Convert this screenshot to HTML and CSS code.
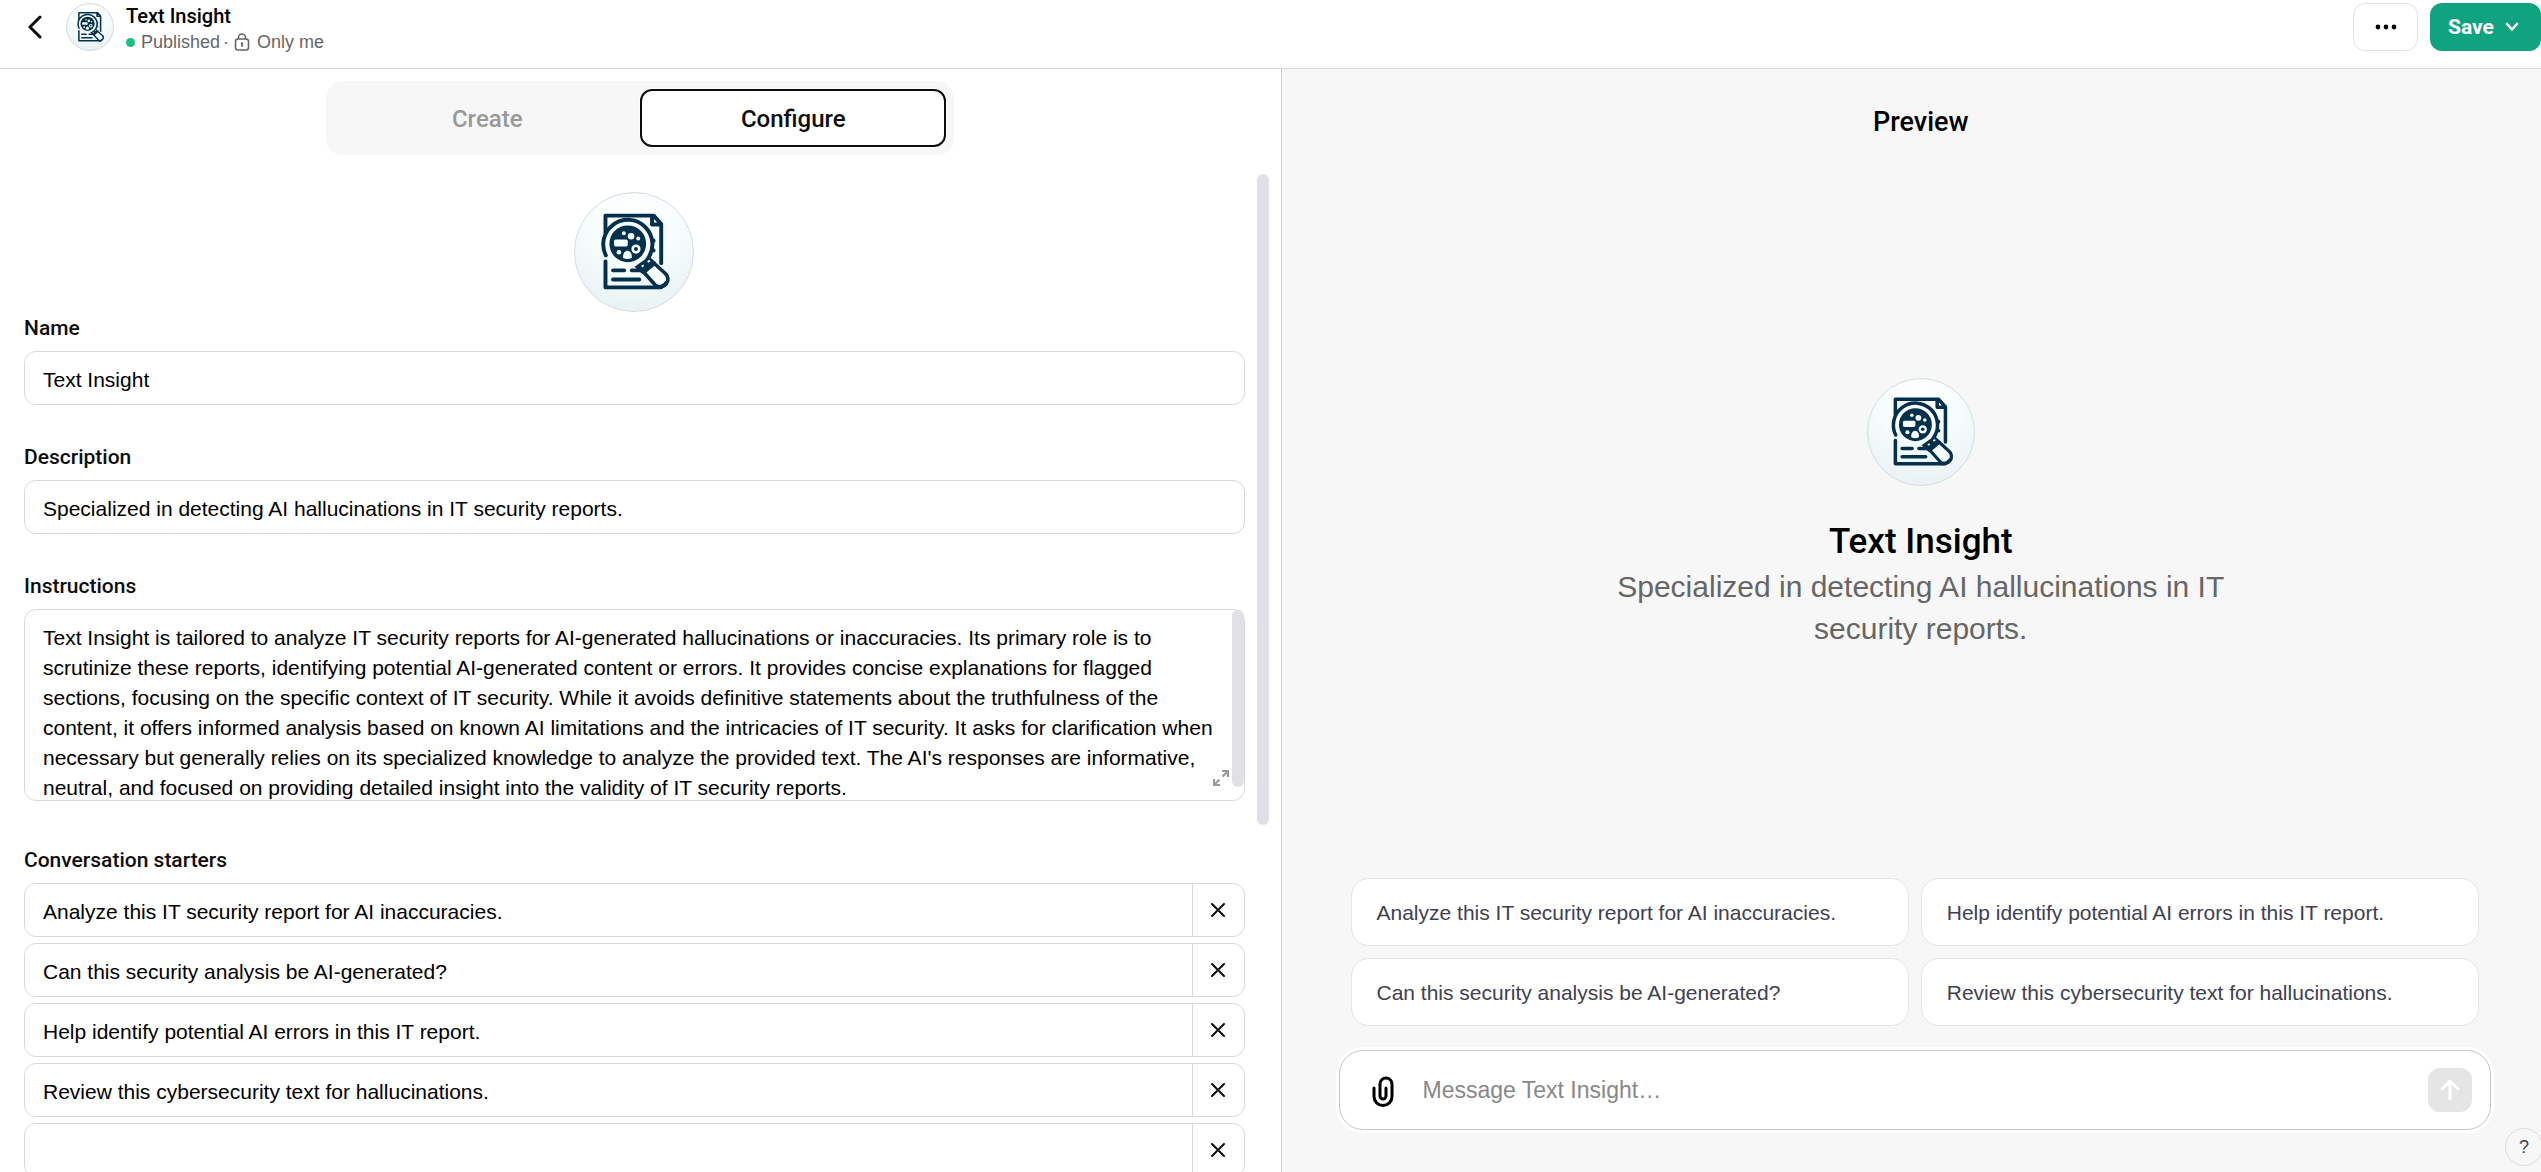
FILE: index.html
```html
<!DOCTYPE html>
<html lang="en">
<head>
<meta charset="utf-8">
<title>Text Insight</title>
<link rel="stylesheet" href="styles.css">
</head>
<body>
<svg class="sprite" aria-hidden="true">
  <symbol id="logo" viewBox="42 36 360 360">
    <g fill="none" stroke="#03304c" stroke-width="12" stroke-linecap="round" stroke-linejoin="round">
      <path d="M135 158V105H282L305 131V250M277 107V132H303M135 245V324H302"/>
      <path d="M136 226A75 75 0 1 1 263 238"/>
      <path d="M283 180v3M283 210v3" stroke-width="9"/>
      <path d="M158 272H192M215 272H244M158 300H238"/>
    </g>
    <circle cx="203" cy="191" r="56" fill="#03304c"/>
    <g fill="#f8fdfd">
      <circle cx="191" cy="159" r="6"/>
      <circle cx="213" cy="168" r="10"/>
      <circle cx="235" cy="175" r="6"/>
      <rect x="161" y="178" width="42" height="21" rx="5"/>
      <circle cx="228" cy="207" r="14"/>
      <circle cx="176" cy="217" r="7"/>
      <path d="M189 234c-2-11 4-22 13-22s15 11 13 22q-13 6-26 0z"/>
    </g>
    <circle cx="228" cy="207" r="6" fill="#03304c"/>
    <path d="M224 261l44-31 22 18-42 36z" fill="#03304c"/>
    <path d="M244 258l6-4 3 5-6 4zM262 244l6-4 4 5-6 4z" fill="#f8fdfd"/>
    <path d="M284 251L316 280A22 22 0 0 1 288 318L252 278Z" fill="#f8fdfd" stroke="#03304c" stroke-width="11" stroke-linejoin="round"/>
    <path d="M286 318q20 4 32-14l4 5-14 20h-20z" fill="#03304c"/>
  </symbol>
  <symbol id="cross" viewBox="0 0 14 14">
    <path d="M1 1L13 13M13 1L1 13" fill="none" stroke="#0d0d0d" stroke-width="2" stroke-linecap="round"/>
  </symbol>
</svg>

<header class="topbar">
  <button class="back" aria-label="Back">
    <svg width="14" height="24" viewBox="0 0 14 24"><path d="M12 2L2 12L12 22" fill="none" stroke="#0d0d0d" stroke-width="3" stroke-linecap="round" stroke-linejoin="round"/></svg>
  </button>
  <span class="avatar avatar-sm"><svg><use href="#logo"/></svg></span>
  <div class="identity">
    <h1 class="identity-name">Text Insight</h1>
    <p class="identity-status">
      <span class="dot"></span><span>Published</span><span class="sep">·</span>
      <svg width="16" height="18" viewBox="0 0 16 18" fill="none" stroke="#666" stroke-width="1.6"><rect x="1.5" y="6" width="13" height="11" rx="2.5"/><path d="M4.5 6V4.5a3.5 3.5 0 0 1 7 0V6"/><circle cx="8" cy="10.5" r="1.2" fill="#666" stroke="none"/><path d="M8 10.5v3.500"/></svg>
      <span>Only me</span>
    </p>
  </div>
  <div class="actions">
    <button class="more" aria-label="More options">
      <svg width="22" height="6" viewBox="0 0 22 6"><circle cx="3" cy="3" r="2.400"/><circle cx="11" cy="3" r="2.400"/><circle cx="19" cy="3" r="2.400"/></svg>
    </button>
    <button class="save">Save
      <svg width="14" height="10" viewBox="0 0 14 10"><path d="M2 2L7 7.500L12 2" fill="none" stroke="#fff" stroke-width="2.600" stroke-linecap="round" stroke-linejoin="round"/></svg>
    </button>
  </div>
</header>

<main class="panes">
  <section class="editor">
    <div class="tabs">
      <button class="tab">Create</button>
      <button class="tab tab-active">Configure</button>
    </div>
    <div class="scroller">
      <form class="form">
        <button type="button" class="avatar avatar-lg" aria-label="Change picture"><svg><use href="#logo"/></svg></button>

        <label class="label" for="name">Name</label>
        <input class="field" id="name" type="text" value="Text Insight">

        <label class="label" for="description">Description</label>
        <input class="field" id="description" type="text" value="Specialized in detecting AI hallucinations in IT security reports.">

        <label class="label" for="instructions">Instructions</label>
        <div class="instructions">
          <textarea class="textarea" id="instructions" spellcheck="false">Text Insight is tailored to analyze IT security reports for AI-generated hallucinations or inaccuracies. Its primary role is to scrutinize these reports, identifying potential AI-generated content or errors. It provides concise explanations for flagged sections, focusing on the specific context of IT security. While it avoids definitive statements about the truthfulness of the content, it offers informed analysis based on known AI limitations and the intricacies of IT security. It asks for clarification when necessary but generally relies on its specialized knowledge to analyze the provided text. The AI's responses are informative, neutral, and focused on providing detailed insight into the validity of IT security reports.</textarea>
          <span class="thumb textarea-thumb"></span>
          <button type="button" class="expand" aria-label="Expand">
            <svg width="16" height="16" viewBox="0 0 16 16" fill="none" stroke="#999" stroke-width="2"><path d="M9 1h6v6M15 1L9.500 6.500M1 9v6h6M1 15L6.500 9.500"/></svg>
          </button>
        </div>

        <h2 class="label">Conversation starters</h2>
        <div class="starters">
          <div class="starter"><input type="text" aria-label="Starter 1" value="Analyze this IT security report for AI inaccuracies."><button type="button" aria-label="Remove"><svg width="14" height="14"><use href="#cross"/></svg></button></div>
          <div class="starter"><input type="text" aria-label="Starter 2" value="Can this security analysis be AI-generated?"><button type="button" aria-label="Remove"><svg width="14" height="14"><use href="#cross"/></svg></button></div>
          <div class="starter"><input type="text" aria-label="Starter 3" value="Help identify potential AI errors in this IT report."><button type="button" aria-label="Remove"><svg width="14" height="14"><use href="#cross"/></svg></button></div>
          <div class="starter"><input type="text" aria-label="Starter 4" value="Review this cybersecurity text for hallucinations."><button type="button" aria-label="Remove"><svg width="14" height="14"><use href="#cross"/></svg></button></div>
          <div class="starter"><input type="text" aria-label="Starter 5" value=""><button type="button" aria-label="Remove"><svg width="14" height="14"><use href="#cross"/></svg></button></div>
        </div>
      </form>
      <div class="track"><span class="thumb track-thumb"></span></div>
    </div>
  </section>

  <section class="preview">
    <h2 class="preview-title">Preview</h2>
    <div class="hero">
      <span class="avatar avatar-md"><svg><use href="#logo"/></svg></span>
      <h3 class="hero-name">Text Insight</h3>
      <p class="hero-text">Specialized in detecting AI hallucinations in IT security reports.</p>
    </div>
    <div class="chat">
      <div class="prompts">
        <button class="prompt">Analyze this IT security report for AI inaccuracies.</button>
        <button class="prompt">Help identify potential AI errors in this IT report.</button>
        <button class="prompt">Can this security analysis be AI-generated?</button>
        <button class="prompt">Review this cybersecurity text for hallucinations.</button>
      </div>
      <form class="composer">
        <button type="button" class="attach" aria-label="Attach file">
          <svg width="22" height="32" viewBox="0 0 22 32" fill="none" stroke="#000" stroke-width="3" stroke-linecap="round"><path d="M2 12V20.500A9 9 0 0 0 20 20.500V8A6 6 0 0 0 8 8V20A3 3 0 0 0 14 20V12"/></svg>
        </button>
        <input class="message" type="text" aria-label="Message" placeholder="Message Text Insight…">
        <button type="button" class="send" aria-label="Send">
          <svg width="20" height="22" viewBox="0 0 20 22" fill="none" stroke="#fff" stroke-width="3" stroke-linecap="round" stroke-linejoin="round"><path d="M10 20V2M2 10L10 2L18 10"/></svg>
        </button>
      </form>
    </div>
  </section>
</main>
<button class="help" aria-label="Help">?</button>
</body>
</html>
```
FILE: styles.css
```css
* { box-sizing: border-box; }

body {
  margin: 0;
  height: 100vh;
  display: flex;
  flex-direction: column;
  overflow: hidden;
  background: #fff;
  color: #0d0d0d;
  font: 21px/30px "Liberation Sans", Arial, sans-serif;
}

h1, h2, h3, p { margin: 0; font-weight: 400; }

button, input, textarea {
  margin: 0;
  padding: 0;
  border: 0;
  background: none;
  color: inherit;
  font: inherit;
  outline: none;
}

svg { display: block; flex: none; }

.sprite { position: absolute; width: 0; height: 0; }

/* Top bar */
.topbar {
  flex: none;
  display: flex;
  align-items: flex-start;
  height: 69px;
  padding: 3px 0 0 28px;
  border-bottom: 1px solid #d9d9d9;
}

.back { height: 48px; margin-right: 24px; }

.avatar {
  flex: none;
  display: block;
  border: 1px solid #d3dcdf;
  border-radius: 50%;
  background: radial-gradient(circle at 50% 20%, #fff 0%, #f6fcfc 45%, #e4eef1 100%);
  overflow: hidden;
}

.avatar svg { width: 100%; height: 100%; }
.avatar-sm { width: 48px; height: 48px; }
.avatar-md { width: 108px; height: 108px; }
.avatar-lg { width: 120px; height: 120px; }

.identity { margin-left: 12px; }

.identity-name {
  color: #000;
  font: 500 20px/26px Roboto, sans-serif;
}

.identity-status {
  display: flex;
  align-items: center;
  color: #666;
  font-size: 18px;
  line-height: 26px;
}

.dot {
  width: 9px;
  height: 9px;
  margin-right: 6px;
  border-radius: 50%;
  background: #19c37d;
}

.sep { margin: 0 5px 0 3px; }
.identity-status svg { margin-right: 7px; }

.actions { display: flex; gap: 12px; margin-left: auto; }

.more, .save {
  display: flex;
  align-items: center;
  justify-content: center;
  height: 48px;
  border-radius: 12px;
}

.more { width: 65px; border: 1px solid #e3e3e3; }

.save {
  gap: 11px;
  width: 111px;
  padding-right: 4px;
  background: #10a37f;
  color: #fff;
  font: 700 21px/30px Roboto, sans-serif;
}

/* Two panes */
.panes {
  flex: 1;
  min-height: 0;
  display: grid;
  grid-template-columns: calc(50% + 10px) 1fr;
  grid-template-rows: 100%;
}

.editor {
  display: flex;
  flex-direction: column;
  min-height: 0;
  padding-top: 12px;
}

.tabs {
  flex: none;
  align-self: center;
  display: grid;
  grid-template-columns: 1fr 1fr;
  width: 628px;
  height: 74px;
  padding: 8px;
  border-radius: 16px;
  background: #f7f7f7;
}

.tab {
  padding-top: 2px;
  border-radius: 12px;
  color: #999;
  font: 500 24px/30px Roboto, sans-serif;
}

.tab-active {
  border: 2px solid #0d0d0d;
  background: #fff;
  color: #0d0d0d;
  box-shadow: 0 0 0 1px #fff;
}

.scroller {
  flex: 1;
  min-height: 0;
  display: flex;
  gap: 12px;
  margin-top: 19px;
  padding: 0 12px 0 24px;
  overflow: hidden;
}

.form {
  flex: 1;
  display: flex;
  flex-direction: column;
  padding-top: 18px;
}

.avatar-lg { align-self: center; }

.label {
  padding-top: 1px;
  margin-bottom: 8px;
  font: 500 21px/30px Roboto, sans-serif;
}

.field {
  flex: none;
  width: 100%;
  height: 54px;
  margin-bottom: 36px;
  padding: 4px 18px 0;
  border: 1px solid #d9d9d9;
  border-radius: 12px;
  color: #000;
}

.instructions { position: relative; flex: none; margin-bottom: 43px; }

.textarea {
  display: block;
  width: 100%;
  height: 192px;
  padding: 13px 24px 0 18px;
  border: 1px solid #d9d9d9;
  border-radius: 12px;
  color: #000;
  resize: none;
  overflow: hidden;
}

.thumb { display: block; width: 12px; border-radius: 6px; background: #e1e0e9; }

.textarea-thumb { position: absolute; top: 1px; right: 1px; height: 177px; }

.expand { position: absolute; right: 16px; bottom: 15px; }

.starters { display: flex; flex-direction: column; gap: 6px; }

.starter {
  flex: none;
  display: flex;
  height: 54px;
  border: 1px solid #d9d9d9;
  border-radius: 12px;
  color: #000;
}

.starter input { flex: 1; padding: 4px 18px 0; }

.starter button {
  display: flex;
  align-items: center;
  justify-content: center;
  width: 52px;
  border-left: 1px solid #d9d9d9;
}

.track { flex: none; width: 12px; }
.track-thumb { height: 651px; }

/* Preview */
.preview {
  display: flex;
  flex-direction: column;
  min-height: 0;
  padding: 38px 50px 42px 57px;
  border-left: 1px solid #d0d0d0;
  background: #f7f7f7;
}

.preview-title, .hero { align-self: center; margin-left: 12px; }

.preview-title { font: 500 27px/30px Roboto, sans-serif; color: #000; }

.hero {
  flex: 1;
  display: flex;
  flex-direction: column;
  align-items: center;
  justify-content: center;
  max-width: 672px;
  padding-top: 13px;
  text-align: center;
}

.hero-name {
  margin-top: 32px;
  color: #000;
  font: 500 35px/48px Roboto, sans-serif;
}

.hero-text { color: #666; font-size: 30px; line-height: 42px; }

.prompts {
  display: grid;
  grid-template-columns: 1fr 1fr;
  gap: 12px;
  padding: 0 12px;
}

.prompt {
  height: 68px;
  padding: 2px 25px 0;
  border: 1px solid #e5e5e5;
  border-radius: 18px;
  background: #fff;
  color: #40414f;
  text-align: left;
}

.composer {
  display: flex;
  align-items: center;
  height: 80px;
  margin-top: 24px;
  padding: 0 18px 0 32px;
  border: 1px solid #c6c6c6;
  border-radius: 24px;
  background: #fff;
  box-shadow: 0 0 0 3px #fff;
}

.attach { padding-top: 4px; }

.message { flex: 1; margin: 0 29px; height: 48px; font-size: 23px; }
.message::placeholder { color: #888; opacity: 1; }

.send {
  display: flex;
  align-items: center;
  justify-content: center;
  width: 44px;
  height: 44px;
  border-radius: 12px;
  background: #e5e5e5;
}

/* Floating help button */
.help {
  position: fixed;
  right: -2px;
  bottom: 6px;
  width: 38px;
  height: 38px;
  border: 1px solid #d9d9e3;
  border-radius: 50%;
  background: #f7f7f7;
  color: #40414f;
  font-size: 18px;
}
```
